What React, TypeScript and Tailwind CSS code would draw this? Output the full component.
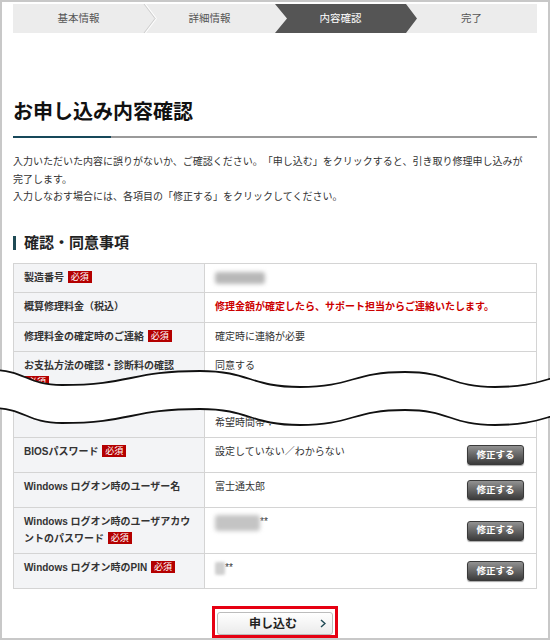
import React from 'react';

const steps = ['基本情報', '詳細情報', '内容確認', '完了'];

const wavePoints: [number, number][] = [
  [-10, 370],
  [62, 385],
  [200, 371],
  [300, 387],
  [405, 372],
  [495, 387],
  [600, 372],
];

const curve = (pts: [number, number][], move = true) => {
  let d = move ? `M${pts[0][0]},${pts[0][1]}` : `L${pts[0][0]},${pts[0][1]}`;
  for (let i = 1; i < pts.length; i++) {
    const [x0, y0] = pts[i - 1];
    const [x1, y1] = pts[i];
    const dx = (x1 - x0) / 2;
    d += ` C${x0 + dx},${y0} ${x1 - dx},${y1} ${x1},${y1}`;
  }
  return d;
};

const topWave = wavePoints;
const bottomWave = wavePoints.map(([x, y]) => [x, y + 38] as [number, number]);
const waveFill = curve(topWave) + ' ' + curve([...bottomWave].reverse(), false) + ' Z';

const Required = () => (
  <>
    {' '}
    <span className="ml-[1px] inline-block bg-[#b40000] px-[3px] align-[1px] text-[9px] leading-[12px] font-normal text-white">必須</span>
  </>
);

const EditButton = () => (
  <button className="my-[1px] h-[20px] w-[57px] shrink-0 rounded-[3px] border border-[#3a3a3a] bg-linear-to-b from-[#929292] to-[#3c3c3c] text-[9.5px] font-bold text-white shadow-[0_1px_1px_rgba(0,0,0,0.35)]">
    修正する
  </button>
);

const labelCls = 'border-r border-b border-[#d4d4d4] bg-[#f3f4f6] py-[6px] pl-[10px] pr-[8px] font-bold text-[#333]';
const valueCls = 'flex items-center justify-between gap-2 border-r border-b border-[#d4d4d4] py-[6px] pl-[10px] pr-[12px] text-[#333]';

const StepBar: React.FC = () => (
  <div className="flex h-[29px] bg-[#ececec]">
    {steps.map((s, i) => (
      <div key={s} className="relative flex flex-1 items-center justify-center">
        {i === 0 && (
          <svg className="absolute left-0 top-0 overflow-visible" width="131" height="29">
            <polyline points="131,0 142,14.5 131,29" fill="none" stroke="#cfcfcf" strokeWidth="1" />
            <polyline points="132.5,0 143.5,14.5 132.5,29" fill="none" stroke="#ffffff" strokeWidth="1" />
          </svg>
        )}
        {i === 2 && (
          <svg className="absolute left-0 top-0 overflow-visible" width="131" height="29">
            <polygon points="0,0 131,0 142,14.5 131,29 0,29 12,14.5" fill="#555555" />
          </svg>
        )}
        <span className={i === 2 ? 'relative text-[10.5px] text-white' : 'relative text-[10.5px] text-[#555]'}>{s}</span>
      </div>
    ))}
  </div>
);

const App: React.FC = () => {
  return (
    <div className="relative h-[640px] w-[550px] bg-white font-['Liberation_Sans','Noto_Sans_CJK_JP',sans-serif] [text-spacing-trim:space-all]">
      <div className="h-full border-2 border-[#c8c8c8] px-[11px] pt-[2px]">
        <StepBar />

        <h1 className="mt-[64px] text-[20px] leading-[30px] font-bold text-[#111]">お申し込み内容確認</h1>
        <div className="mt-[9px] flex h-[2px]">
          <div className="w-[98px] bg-[#17485a]" />
          <div className="flex-1 bg-[#9a9a9a]" />
        </div>

        <p className="mt-[15px] text-[10px] leading-[17.5px] text-[#333]">
          入力いただいた内容に誤りがないか、ご確認ください。「申し込む」をクリックすると、引き取り修理申し込みが
          <br />
          完了します。
          <br />
          入力しなおす場合には、各項目の「修正する」をクリックしてください。
        </p>

        <div className="mt-[27px] flex items-center gap-[8px]">
          <span className="h-[14px] w-[3px] bg-[#1f4a55]" />
          <h2 className="text-[15px] leading-[20px] font-bold text-[#222]">確認・同意事項</h2>
        </div>

        <div className="mt-[10px] grid grid-cols-[191px_1fr] border-t border-l border-[#d4d4d4] text-[10px] leading-[16.5px]">
          <div className={labelCls}>製造番号<Required /></div>
          <div className={valueCls}>
            <span className="mt-[2px] inline-block h-[12px] w-[50px] self-start rounded-[3px] bg-[#b8b8b8] blur-[2px]" />
          </div>

          <div className={labelCls}>概算修理料金（税込）</div>
          <div className={valueCls}>
            <span className="self-start font-bold text-[#cc0000]">修理金額が確定したら、サポート担当からご連絡いたします。</span>
          </div>

          <div className={labelCls}>修理料金の確定時のご連絡<Required /></div>
          <div className={valueCls}>
            <span className="self-start">確定時に連絡が必要</span>
          </div>

          <div className={labelCls}>お支払方法の確認・診断料の確認<Required /></div>
          <div className="flex flex-col border-r border-b border-[#d4d4d4] py-[6px] pl-[10px] pr-[12px] text-[#333]">
            <span>同意する</span>
            <span className="mt-[40px]">希望時間帯：</span>
          </div>

          <div className={labelCls}>BIOSパスワード<Required /></div>
          <div className={valueCls}>
            <span className="self-start">設定していない／わからない</span>
            <EditButton />
          </div>

          <div className={labelCls}>Windows ログオン時のユーザー名</div>
          <div className={valueCls}>
            <span className="self-start">富士通太郎</span>
            <EditButton />
          </div>

          <div className={labelCls}>Windows ログオン時のユーザアカウントのパスワード<Required /></div>
          <div className={valueCls}>
            <span className="flex self-start">
              <span className="mt-[1px] inline-block h-[16px] w-[45px] rounded-[3px] bg-[#c4c4c4] blur-[2px]" />
              <span>**</span>
            </span>
            <EditButton />
          </div>

          <div className={labelCls}>Windows ログオン時のPIN<Required /></div>
          <div className={valueCls}>
            <span className="flex self-start">
              <span className="mt-[2px] inline-block h-[13px] w-[10px] rounded-[2px] bg-[#cfcfcf] blur-[1.5px]" />
              <span>**</span>
            </span>
            <EditButton />
          </div>
        </div>

        <div className="mt-[17px] flex justify-center">
          <div className="border-[3px] border-[#e60012] px-[2px] pt-[3px]">
            <button className="flex h-[23px] w-[116px] items-center rounded-[3px] border border-[#bcbcbc] bg-linear-to-b from-white to-[#ebebeb] pl-[8px] text-[12px] font-bold text-[#222]">
              <span className="flex-1 text-center">申し込む</span>
              <svg className="mr-[6px]" width="6" height="9" viewBox="0 0 6 9">
                <polyline points="1,1 5,4.5 1,8" fill="none" stroke="#1f4a55" strokeWidth="1.5" />
              </svg>
            </button>
          </div>
        </div>
      </div>

      <svg className="pointer-events-none absolute left-0 top-[355px]" width="550" height="85" viewBox="0 355 550 85">
        <path d={waveFill} fill="#ffffff" />
        <path d={curve(topWave)} fill="none" stroke="#111" strokeWidth="1.8" />
        <path d={curve(bottomWave)} fill="none" stroke="#111" strokeWidth="1.8" />
      </svg>
    </div>
  );
};

export default App;
